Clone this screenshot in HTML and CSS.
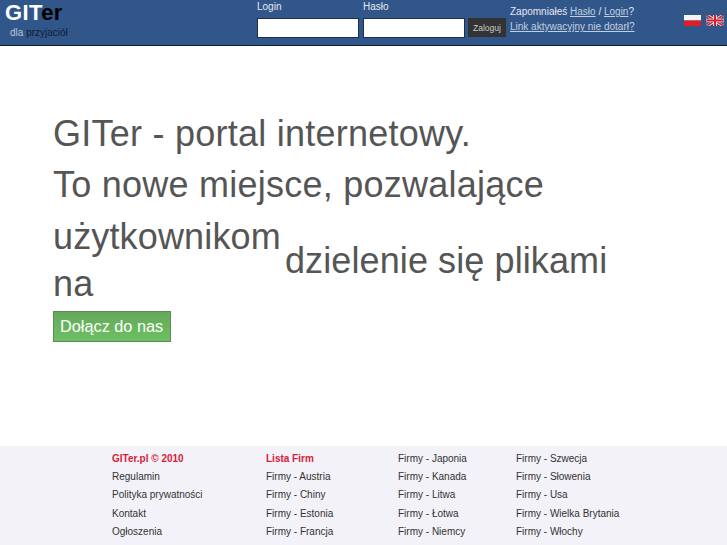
FILE: index.html
```html
<!DOCTYPE html>
<html lang="pl">
<head>
  <meta charset="UTF-8">
  <title>GITer</title>
  <link rel="stylesheet" href="styles.css">
</head>
<body>
  <div class="header">
    <div class="logo">
      <div class="logo-name">GIT<span class="logo-er">er</span></div>
      <div class="logo-sub"><span class="logo-dla">dla</span> przyjaciół</div>
    </div>
    <form class="login">
      <label class="field">Login<input type="text"></label>
      <label class="field">Hasło<input type="password"></label>
      <button type="button" class="login-btn">Zaloguj</button>
    </form>
    <div class="reminder">
      <div>Zapomniałeś <a href="#">Hasło</a> / <a href="#">Login</a>?</div>
      <div><a href="#">Link aktywacyjny nie dotarł?</a></div>
    </div>
    <div class="flags">
      <svg width="17" height="11" viewBox="0 0 17 11"><rect width="17" height="5.5" fill="#f4f4f4"/><rect y="5.5" width="17" height="5.5" fill="#dc1f26"/></svg>
      <svg width="18" height="11" viewBox="0 0 17 11">
        <rect width="17" height="11" fill="#e8e6ea"/>
        <path d="M0 0 17 11M17 0 0 11" stroke="#c8283c" stroke-width="1.6"/>
        <path d="M0 1.5V4H4ZM0 7V9.5L4 7ZM17 1.5V4H13ZM17 7V9.5L13 7ZM3 0H7V2.5ZM10 0H14L10 2.5ZM3 11H7V8.5ZM10 11H14L10 8.5Z" fill="#3c4178"/>
        <path d="M8.5 0V11M0 5.5H17" stroke="#e8e6ea" stroke-width="3.4"/>
        <path d="M8.5 0V11M0 5.5H17" stroke="#d0202e" stroke-width="2"/>
      </svg>
    </div>
  </div>

  <div class="hero">
    <h1>GITer - portal internetowy.</h1>
    <h1>To nowe miejsce, pozwalające</h1>
    <div class="hero-row">
      <h1 class="hero-word">użytkownikom na</h1>
      <h1 class="hero-action">dzielenie się plikami</h1>
    </div>
    <a href="#" class="join-btn">Dołącz do nas</a>
  </div>

  <div class="footer">
    <ul class="col col-first">
      <li class="col-title">GITer.pl © 2010</li>
      <li>Regulamin</li>
      <li>Polityka prywatności</li>
      <li>Kontakt</li>
      <li>Ogłoszenia</li>
    </ul>
    <ul class="col col-second">
      <li class="col-title">Lista Firm</li>
      <li>Firmy - Austria</li>
      <li>Firmy - Chiny</li>
      <li>Firmy - Estonia</li>
      <li>Firmy - Francja</li>
    </ul>
    <ul class="col col-third">
      <li>Firmy - Japonia</li>
      <li>Firmy - Kanada</li>
      <li>Firmy - Litwa</li>
      <li>Firmy - Łotwa</li>
      <li>Firmy - Niemcy</li>
    </ul>
    <ul class="col">
      <li>Firmy - Szwecja</li>
      <li>Firmy - Słowenia</li>
      <li>Firmy - Usa</li>
      <li>Firmy - Wielka Brytania</li>
      <li>Firmy - Włochy</li>
    </ul>
  </div>
</body>
</html>
```

FILE: styles.css
```css
html, body {
  height: 100%;
}

body {
  margin: 0;
  font-family: "Liberation Sans", Arial, sans-serif;
  font-size: 10px;
  color: #333;
  background: #fff;
  display: flex;
  flex-direction: column;
  height: 545px;
  overflow: hidden;
}

a {
  color: inherit;
}

.header {
  display: flex;
  height: 45px;
  flex: none;
  background: #31568a;
  border-bottom: 1px solid #0e1f38;
  color: #e6e9ef;
}

.logo {
  width: 257px;
  flex: none;
  padding: 1px 0 0 5px;
  box-sizing: border-box;
}

.logo-name {
  font-size: 22px;
  line-height: 24px;
  font-weight: bold;
  letter-spacing: 0.4px;
  color: #fff;
}

.logo-er {
  color: #000;
}

.logo-sub {
  margin: 1px 0 0 5px;
  line-height: 14px;
  color: #0f1d33;
}

.logo-dla {
  color: #b9c6d8;
}

.login {
  display: flex;
  width: 253px;
  flex: none;
}

.field {
  display: flex;
  flex-direction: column;
  width: 106px;
  line-height: 13px;
}

.field input {
  width: 102px;
  height: 20px;
  box-sizing: border-box;
  margin: 5px 0 0;
  padding: 0;
  border: 1px solid #1d2f4c;
  background: #fff;
}

.login-btn {
  width: 38px;
  height: 19px;
  margin: 18px 0 0 -1px;
  padding: 0;
  border: 0;
  background: #333;
  color: #ccc;
  font: 8.5px "Liberation Sans", Arial, sans-serif;
}

.reminder {
  width: 174px;
  flex: none;
  padding-top: 4px;
  line-height: 15px;
}

.reminder a {
  color: #c3cfdf;
}

.flags {
  display: flex;
  gap: 5px;
  padding-top: 15px;
}

.hero {
  flex: 1;
  padding: 62px 0 0 53px;
  width: 570px;
  color: #555;
}

.hero h1 {
  margin: 0;
  font-size: 36px;
  font-weight: normal;
  line-height: 51px;
  letter-spacing: 0.24px;
}

.hero-row {
  display: flex;
  align-items: center;
  margin-top: 3px;
  margin-bottom: 4px;
}

.hero-word {
  width: 232px;
}

.hero .hero-word {
  line-height: 47px;
  letter-spacing: 0.15px;
}

.hero .hero-action {
  letter-spacing: 0.1px;
}

.join-btn {
  display: inline-block;
  padding: 0 7px 1px 6px;
  border: 1px solid #5b8a55;
  background: linear-gradient(#65a95b, #6cc062);
  color: #fff;
  font-size: 16.3px;
  line-height: 28px;
  text-decoration: none;
}

.footer {
  display: flex;
  flex: none;
  height: 99px;
  box-sizing: border-box;
  padding: 4px 0 0 112px;
  background: #f2f2f8;
}

.col {
  margin: 0;
  padding: 0;
  list-style: none;
  width: 118px;
  color: #333;
}

.col-first {
  width: 154px;
}

.col-second {
  width: 132px;
}

.col li {
  line-height: 18.2px;
}

.col-title {
  font-weight: bold;
  color: #d8203a;
}
```
